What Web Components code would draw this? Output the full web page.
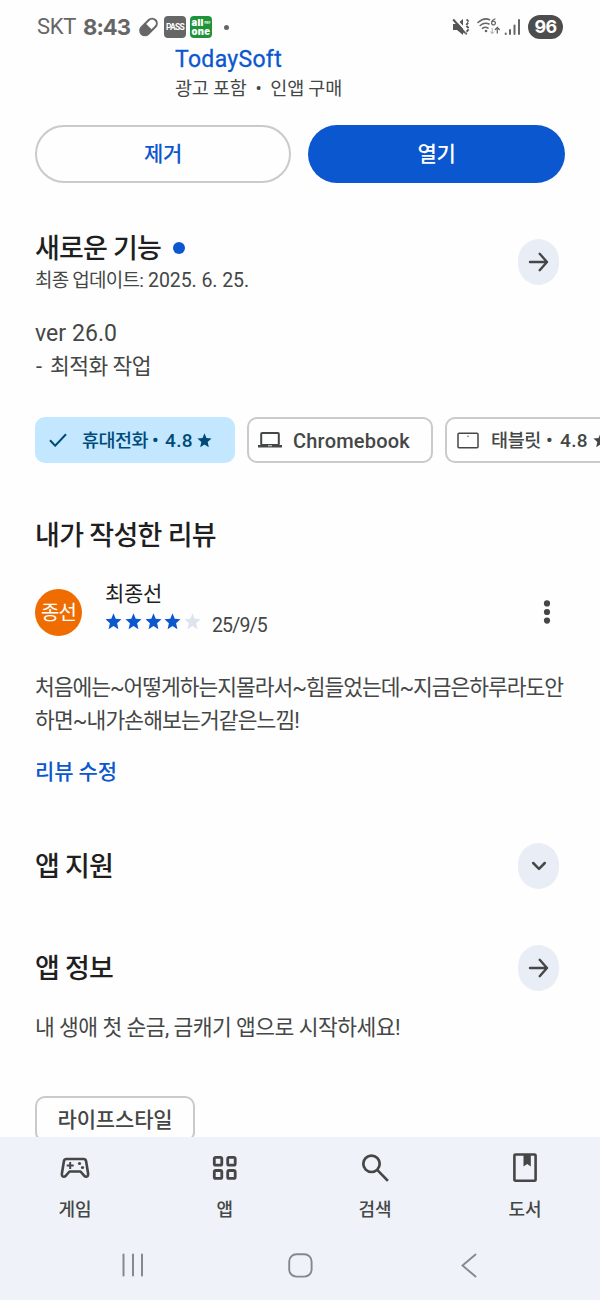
<!DOCTYPE html>
<html lang="ko">
<head>
<meta charset="utf-8">
<title>앱 상세정보</title>
<style>
html,body{margin:0;padding:0}
body{width:600px;height:1300px;overflow:hidden;background:#fefefe;font-family:Roboto,"Noto Sans CJK KR",sans-serif;color:#444746}
</style>
</head>
<body>
<store-page></store-page>
<script>
// Text run whose tracking is adjusted so that it fills the width given in "w".
class FitText extends HTMLElement{
  connectedCallback(){
    if(this.shadowRoot)return;
    const a=n=>this.getAttribute(n);
    this.attachShadow({mode:'open'}).innerHTML=`<style>:host{display:block;flex:none;white-space:nowrap;width:${a('w')}px;font-size:${a('s')}px;line-height:${a('h')||24}px;font-weight:${a('wt')||400};color:${a('c')||'inherit'}}</style><span><slot></slot></span>`;
    const n=[...this.textContent].length;
    const nat=this.shadowRoot.querySelector('span').getBoundingClientRect().width;
    this.style.letterSpacing=((+a('w')-nat)/n).toFixed(3)+'px';
  }
}
customElements.define('fit-text',FitText);

const ICONS={
pill:[21,22,'<g transform="rotate(-45 10.500 11)"><rect x="-.3" y="5.300" width="21.600" height="11.400" rx="5.700" fill="#666"/><path d="M11 7.300h4.600a3.700 3.700 0 0 1 0 7.400H11z" fill="#fefefe"/></g>'],
mute:[18,18,'<path d="M1 6h4l6-5v16l-6-5H1z" fill="#555"/><path d="M2.500 0l12 13" stroke="#fefefe" stroke-width="2"/><path d="M1.200 1.500L13 15" stroke="#555" stroke-width="2"/><path d="M14.500 1.500q3 1.800 1 3.800t0 3.700 0 3.700-1 3.800" fill="none" stroke="#555" stroke-width="1.800" stroke-dasharray="2.800 1"/>'],
wifi:[23,20,'<g fill="none" stroke="#666" stroke-width="1.600" stroke-linecap="round"><path d="M1 5.500Q7 .2 12.500 2.700M3.200 8.500q4.300-3.600 8.800-1.500M5.500 11.300q2.800-2 5.500-.2"/><path d="M18 2q-3.500 1-3.400 4a1.900 1.900 0 1 0 .3-1" stroke-width="1.300"/><path d="M20.300 16v-5.500m-2 2l2-2 2 2" stroke-width="1.300"/><path d="M15.200 11.500v5m-1.700-1.700l1.700 1.700 1.700-1.700" stroke="#aaa" stroke-width="1"/></g><circle cx="9" cy="14" r="1.300" fill="#666"/>'],
signal:[17,18,'<g stroke="#666" stroke-width="2" stroke-linecap="round"><path d="M1.700 15.600v.4M6 12v4M10.500 7.500V16" /><path d="M15 2v14"/></g>'],
arrow:[22,20,'<path d="M2 10h17M11.700 1.800L19 10l-7.300 8.200" fill="none" stroke="#444746" stroke-width="2.400" stroke-linecap="round" stroke-linejoin="round"/>'],
down:[16,12,'<path d="M2.200 3L8 8.800 13.800 3" fill="none" stroke="#444746" stroke-width="2.500" stroke-linecap="round" stroke-linejoin="round"/>'],
check:[18,14,'<path d="M1 7.300L6.200 12.700 17 1.200" fill="none" stroke="#004a77" stroke-width="2"/>'],
star:[17,17,'<path d="M8.500 .2l2.200 5.500 5.800.5-4.400 4 1.300 6-4.900-3.200-4.900 3.200 1.300-6L.5 6.200l5.800-.5z" fill="currentColor"/>'],
laptop:[24,18,'<rect x="3.200" y="2" width="17.600" height="12" rx="1" fill="none" stroke="#444746" stroke-width="2"/><path d="M0 14h24v2.500H0z" fill="#444746"/><path d="M10 14.800h4" stroke="#ddd"/>'],
tablet:[22,17,'<rect x="1" y="1.200" width="20" height="14.600" rx="1" fill="none" stroke="#444746" stroke-width="1.500"/><circle cx="11" cy="4.200" r=".7" fill="#444746"/>'],
more:[8,26,'<g fill="#444746"><circle cx="4" cy="4.400" r="3.100"/><circle cx="4" cy="13" r="3.100"/><circle cx="4" cy="21.600" r="3.100"/></g>'],
game:[30,24,'<path d="M6.500 3h17q2.200 0 2.600 2.200l2 12.300q.3 3-1.800 3.200-1.200 0-2-.9L20.500 15.500h-11L5.700 19.800q-.8.9-2 .9-2.100-.2-1.800-3.200l2-12.300Q4.300 3 6.500 3z" fill="none" stroke="#444746" stroke-width="2.600" stroke-linejoin="round"/><path d="M10.200 6v7M6.700 9.500h7" stroke="#444746" stroke-width="2"/><circle cx="19.500" cy="7.500" r="1.600" fill="#444746"/><circle cx="22.500" cy="11.500" r="1.600" fill="#444746"/>'],
apps:[26,26,'<g fill="none" stroke="#444746" stroke-width="2.800"><rect x="2.300" y="2.300" width="7.500" height="7.900" rx="1.500"/><rect x="15.700" y="2.300" width="7.500" height="7.900" rx="1.500"/><rect x="2.300" y="15.500" width="7.500" height="7.900" rx="1.500"/><rect x="15.700" y="15.500" width="7.500" height="7.900" rx="1.500"/></g>'],
search:[28,30,'<g fill="none" stroke="#444746" stroke-width="2.700"><circle cx="10.500" cy="10.800" r="8.200"/><path d="M16.200 16.900l10.700 11"/></g>'],
book:[24,30,'<rect x="1.400" y="1.500" width="21.200" height="26.200" rx="1" fill="none" stroke="#444746" stroke-width="2.600"/><path d="M10.500 2h7.300v11.500L14.200 11l-3.700 2.500z" fill="#444746"/>'],
recents:[22,24,'<path d="M1.500 1.500v21M11 1.500v21M20 1.500v21" stroke="#85888c" stroke-width="2" stroke-linecap="round"/>'],
home:[25,25,'<rect x="1.200" y="1.200" width="22.400" height="22.400" rx="7.200" fill="none" stroke="#85888c" stroke-width="1.900"/>'],
back:[16,25,'<path d="M14.500 1.500L1.500 12.500l13 11" fill="none" stroke="#85888c" stroke-width="1.900" stroke-linecap="round"/>']
};
customElements.define('x-icon',class extends HTMLElement{
  connectedCallback(){
    if(this.shadowRoot)return;
    const [w,h,body]=ICONS[this.getAttribute('name')];
    this.attachShadow({mode:'open'}).innerHTML=`<style>:host{display:block;flex:none;width:${w}px;height:${h}px}svg{display:block;width:100%;height:100%}</style><svg viewBox="0 0 ${w} ${h}">${body}</svg>`;
  }
});

// Registers an element whose shadow root is cloned from fixed markup.
function define(name,html){
  const t=document.createElement('template');
  t.innerHTML=html;
  customElements.define(name,class extends HTMLElement{
    connectedCallback(){ if(!this.shadowRoot)this.attachShadow({mode:'open'}).append(document.importNode(t.content,true)); }
  });
}

define('pill-button',`<style>:host{display:flex;flex:none;box-sizing:border-box;height:58px;width:256px;border-radius:29px;border:2px solid #cacaca;align-items:center;justify-content:center;color:#0b57d0}:host([filled]){background:#0b57d0;border:0;color:#fff;width:257px}</style><slot></slot>`);
define('round-button',`<style>:host{display:flex;flex:none;width:41px;height:46px;border-radius:20.500px/21.500px;background:#e8edf6;align-items:center;justify-content:center}</style><slot></slot>`);
define('filter-chip',`<style>:host{display:flex;flex:none;box-sizing:border-box;height:46px;border:2px solid #cacaca;border-radius:10px;align-items:center}:host([on]){background:#c2e7ff;border-color:#c2e7ff;color:#004a77}::slotted(fit-text){padding-top:1px}</style><slot></slot>`);
define('section-head',`<style>:host{display:flex;justify-content:space-between;align-items:center;height:46px;padding:0 41px 0 35px;color:#1f1f1f}::slotted(fit-text){padding-top:2px}</style><slot></slot>`);

define('status-bar',`<style>
:host{display:flex;height:46px;padding:8px 37px 0 37px;box-sizing:border-box;align-items:center;justify-content:space-between;color:#666}
div{display:flex;align-items:center}
.app{width:22px;height:22px;border-radius:4px;background:#666;color:#fff;display:flex;flex-direction:column;align-items:center;justify-content:center}
.green{background:#1e9339;margin-left:4px;font-family:Inter,sans-serif}
.row{gap:1px}
i{width:5px;height:5px;border-radius:50%;background:#666;margin-left:12px}
.bat{width:35px;height:24px;border-radius:12px;background:#4d4d4d;color:#fff;justify-content:center;margin-left:6px;font-family:Inter,sans-serif}
</style>
<div><fit-text w="39" s="22" h="24">SKT</fit-text><fit-text style="margin-left:7px;font-family:Inter" w="47" s="22" h="24" wt="700">8:43</fit-text><x-icon name="pill" style="margin-left:8px"></x-icon>
<div class="app" style="margin-left:5px"><fit-text w="18" s="8.500" h="12" wt="700">PASS</fit-text></div>
<div class="app green"><div class="row"><fit-text w="12" s="9.500" h="9" wt="900">all</fit-text><fit-text w="6" s="3" h="4" wt="700">PAY</fit-text></div><fit-text w="19" s="9.500" h="9" wt="900">one</fit-text></div><i></i></div>
<div><x-icon name="mute"></x-icon><x-icon name="wifi" style="margin-left:7px"></x-icon><x-icon name="signal" style="margin-left:4px"></x-icon><div class="bat" style="margin-left:7px"><fit-text w="22" s="18" h="24" wt="700">96</fit-text></div></div>`);

define('my-review',`<style>
:host{display:flex;height:60px;padding:0 49px 0 35px;align-items:flex-start;color:#444746}
.av{display:flex;width:47px;height:47px;margin-top:7px;border-radius:50%;background:#ef6c00;color:#fff;align-items:center;justify-content:center;flex:none}
.who{margin-left:23px;flex:1}
.rate{display:flex;margin-top:5px;gap:2.800px;color:#0b57d0;align-items:flex-start}
.rate x-icon{margin-top:2px}
.off{color:#dfe3ee}
.rate fit-text{margin:3px 0 0 8px;color:#444746}
x-icon[name=more]{margin-top:17px}
</style>
<div class="av"><fit-text w="35" s="20">종선</fit-text></div>
<div class="who"><fit-text w="57" s="21" h="24" c="#1f1f1f">최종선</fit-text>
<div class="rate"><x-icon name="star"></x-icon><x-icon name="star"></x-icon><x-icon name="star"></x-icon><x-icon name="star"></x-icon><x-icon name="star" class="off"></x-icon><fit-text w="55" s="19.500" h="24">25/9/5</fit-text></div></div>
<x-icon name="more"></x-icon>`);

define('nav-item',`<style>:host{display:flex;flex:1;flex-direction:column;align-items:center}.i{height:34px;display:flex;align-items:center;justify-content:center;margin-bottom:13px}</style><div class="i"><slot name="icon"></slot></div><slot></slot>`);
define('bottom-bar',`<style>:host{display:block;height:163px;background:#eff2f8;flex:none}
.tabs{display:flex;padding-top:14px;height:82px}
.sys{display:flex;align-items:center;justify-content:space-between;height:64px;padding:0 123px 0 122px}
x-icon[name=home]{margin-right:5px}</style>
<div class="tabs">
<nav-item><x-icon slot="icon" name="game"></x-icon><fit-text w="33" s="18" wt="500">게임</fit-text></nav-item>
<nav-item><x-icon slot="icon" name="apps"></x-icon><fit-text w="17" s="18" wt="500">앱</fit-text></nav-item>
<nav-item><x-icon slot="icon" name="search"></x-icon><fit-text w="33" s="18" wt="500">검색</fit-text></nav-item>
<nav-item><x-icon slot="icon" name="book"></x-icon><fit-text w="33" s="18" wt="500">도서</fit-text></nav-item>
</div><div class="sys"><x-icon name="recents"></x-icon><x-icon name="home"></x-icon><x-icon name="back"></x-icon></div>`);

define('store-page',`<style>
:host{display:flex;flex-direction:column;width:600px;height:1300px;overflow:hidden}
main{flex:1;min-height:0;overflow:hidden}
.dev{padding-left:175px}
.btns{display:flex;gap:17px;padding-left:35px;margin-top:24px}
.new{height:56px}
.line,.title{display:flex;align-items:center}
.dot{width:12px;height:12px;border-radius:50%;background:#0b57d0;margin:0 0 3px 12px}
.p{padding-left:35px}
.chips{display:flex;gap:12px;padding-left:35px;margin-top:34px}
</style>
<status-bar></status-bar>
<main>
<div class="dev"><fit-text w="107" s="23" h="26" c="#0b57d0" style="padding-top:1px;-webkit-text-stroke:.3px #0b57d0">TodaySoft</fit-text><fit-text w="167" s="18.500" h="24" style="margin-top:4px">광고 포함 &nbsp;•&nbsp; 인앱 구매</fit-text></div>
<div class="btns"><pill-button><fit-text w="38" s="21" wt="500">제거</fit-text></pill-button><pill-button filled><fit-text w="38" s="21" wt="500">열기</fit-text></pill-button></div>
<section-head class="new" style="margin-top:51px"><div style="padding-top:3px"><div class="title"><fit-text w="126" s="27" h="30" wt="500">새로운 기능</fit-text><div class="dot"></div></div><div class="line" style="margin-top:5px"><fit-text w="108" s="19" h="24" c="#444746">최종 업데이트:</fit-text><fit-text w="101" s="19.500" h="24" c="#444746" style="margin-left:5px">2025. 6. 25.</fit-text></div></div><round-button><x-icon name="arrow"></x-icon></round-button></section-head>
<div class="p" style="margin-top:27px"><fit-text w="82" s="23" h="33">ver 26.0</fit-text><div class="line"><fit-text w="10" s="21.500" h="33" style="padding-left:1px">-</fit-text><fit-text w="101" s="21.500" h="33" style="margin-left:4px">최적화 작업</fit-text></div></div>
<div class="chips">
<filter-chip on style="width:200px"><x-icon name="check" style="margin-left:12px"></x-icon><fit-text w="66" s="18.500" wt="500" style="margin-left:15px">휴대전화</fit-text><fit-text w="7" s="19" wt="500" style="margin-left:4px">•</fit-text><fit-text w="28" s="19" wt="500" style="margin-left:6px">4.8</fit-text><x-icon name="star" style="margin-left:4px;width:15px;height:15px"></x-icon></filter-chip>
<filter-chip style="width:186px"><x-icon name="laptop" style="margin-left:9px"></x-icon><fit-text w="117" s="20" wt="500" style="margin-left:11px">Chromebook</fit-text></filter-chip>
<filter-chip style="width:210px"><x-icon name="tablet" style="margin-left:10px"></x-icon><fit-text w="50" s="18.500" wt="500" style="margin-left:12px">태블릿</fit-text><fit-text w="7" s="19" wt="500" style="margin-left:5px">•</fit-text><fit-text w="28" s="19" wt="500" style="margin-left:7px">4.8</fit-text><x-icon name="star" style="margin-left:5px;width:15px;height:15px"></x-icon></filter-chip>
</div>
<section-head style="margin-top:49px"><fit-text w="181" s="27" h="30" wt="500">내가 작성한 리뷰</fit-text></section-head>
<my-review style="margin-top:24px"></my-review>
<div class="p" style="margin-top:29px"><fit-text w="528" s="21.500" h="33">처음에는~어떻게하는지몰라서~힘들었는데~지금은하루라도안</fit-text><fit-text w="264" s="21.500" h="33">하면~내가손해보는거같은느낌!</fit-text>
<fit-text w="82" s="21" h="24" wt="500" c="#0b57d0" style="margin-top:23px">리뷰 수정</fit-text></div>
<section-head style="margin-top:59px"><fit-text w="78" s="27" h="30" wt="500">앱 지원</fit-text><round-button><x-icon name="down"></x-icon></round-button></section-head>
<section-head style="margin-top:56px"><fit-text w="78" s="27" h="30" wt="500">앱 정보</fit-text><round-button><x-icon name="arrow"></x-icon></round-button></section-head>
<div class="p" style="margin-top:25px"><fit-text w="365" s="21.500" h="24">내 생애 첫 순금, 금캐기 앱으로 시작하세요!</fit-text></div>
<div class="p" style="margin-top:56px"><filter-chip style="width:160px;justify-content:center"><fit-text w="115" s="21" wt="500">라이프스타일</fit-text></filter-chip></div>
</main>
<bottom-bar></bottom-bar>`);
</script>
</body>
</html>
